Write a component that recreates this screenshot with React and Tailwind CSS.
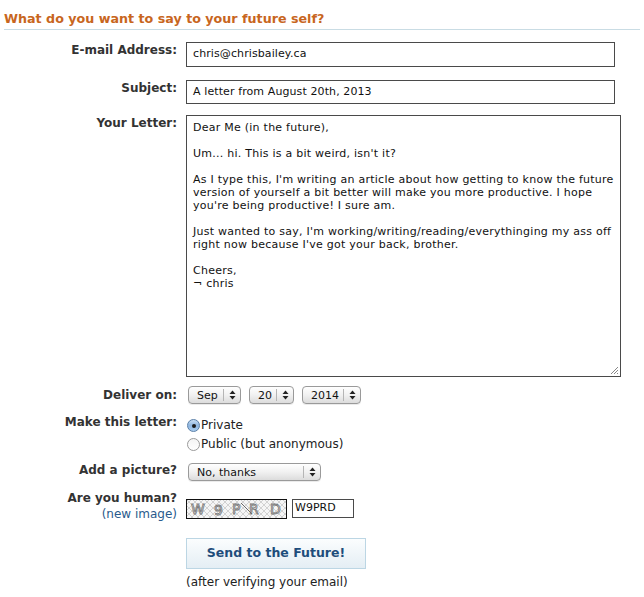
import React from "react";

const font = { fontFamily: '"DejaVu Sans", Verdana, sans-serif' };

function Arrows() {
  return (
    <svg width="7" height="10" viewBox="0 0 7 10" className="shrink-0">
      <path d="M3.5 0.5 L6.5 4 L0.5 4 Z" fill="#222" />
      <path d="M3.5 9.5 L6.5 6 L0.5 6 Z" fill="#222" />
    </svg>
  );
}

function AquaSelect({ value, width }) {
  return (
    <div
      className="flex items-stretch h-[18px] rounded-[4px] border border-[#9a9a9a] bg-gradient-to-b from-[#ffffff] via-[#f1f1f1] to-[#dcdcdc] shadow-[0_1px_0_rgba(0,0,0,0.08)]"
      style={{ width }}
    >
      <div className="flex-1 flex items-center pl-[8px] text-[11px] text-[#111] leading-none">{value}</div>
      <div className="w-px bg-[#b5b5b5] my-[2px]" />
      <div className="w-[16px] flex items-center justify-center">
        <Arrows />
      </div>
    </div>
  );
}

function Radio({ checked }) {
  return checked ? (
    <div className="w-[13px] h-[13px] rounded-full border border-[#5a7fa8] bg-gradient-to-b from-[#c9def3] via-[#8fb6e0] to-[#a9cdf0] flex items-center justify-center shrink-0">
      <div className="w-[4px] h-[4px] rounded-full bg-[#1a1a1a]" />
    </div>
  ) : (
    <div className="w-[13px] h-[13px] rounded-full border border-[#9a9a9a] bg-gradient-to-b from-[#f4f4f4] to-[#ffffff] shrink-0" />
  );
}

function Captcha() {
  return (
    <svg width="101" height="20" viewBox="0 0 101 20" className="block">
      <defs>
        <pattern id="hatch" width="6" height="6" patternUnits="userSpaceOnUse">
          <rect width="6" height="6" fill="#f5f5f5" />
          <path d="M0 0 L6 6 M6 0 L0 6" stroke="#c8c8c8" strokeWidth="0.8" />
        </pattern>
      </defs>
      <rect x="0.5" y="0.5" width="100" height="19" fill="url(#hatch)" stroke="#111" />
      <g fontFamily="DejaVu Sans, sans-serif" fontSize="14" fill="#e2e2e2" stroke="#777" strokeWidth="0.8">
        <text x="5" y="15">W</text>
        <text x="28" y="16">9</text>
        <text x="46" y="15">P</text>
        <text x="63" y="15">R</text>
        <text x="84" y="15">D</text>
      </g>
      <path d="M55 4 L66 15" stroke="#6a6a6a" strokeWidth="1" />
    </svg>
  );
}

function Label({ children, className = "" }) {
  return (
    <div className={"w-[177px] shrink-0 text-right font-bold text-[12px] text-[#333] leading-[16px] " + className}>
      {children}
    </div>
  );
}

export default function App() {
  const letter = `Dear Me (in the future),

Um... hi. This is a bit weird, isn't it?

As I type this, I'm writing an article about how getting to know the future version of yourself a bit better will make you more productive. I hope you're being productive! I sure am.

Just wanted to say, I'm working/writing/reading/everythinging my ass off right now because I've got your back, brother.

Cheers,
¬ chris`;

  return (
    <div className="w-[644px] h-[597px] bg-white overflow-hidden text-[#222]" style={font}>
      <div className="pt-[10px] pl-[4px] pr-[4px]">
        <h1 className="text-[12.7px] font-bold text-[#c8661e] leading-[17px]">
          What do you want to say to your future self?
        </h1>
        <div className="mt-[2px] h-px bg-[#c9dce4]" />
      </div>

      {/* Email */}
      <div className="flex mt-[12px]">
        <Label>E-mail Address:</Label>
        <div className="ml-[9px] w-[429px] h-[25px] border border-[#4a4a4a] flex items-center px-[6px] text-[11px] tracking-[0.1px] text-[#111]">
          chris@chrisbailey.ca
        </div>
      </div>

      {/* Subject */}
      <div className="flex mt-[13px]">
        <Label>Subject:</Label>
        <div className="ml-[9px] w-[429px] h-[24px] border border-[#4a4a4a] flex items-center px-[6px] text-[11px] tracking-[0.1px] text-[#111]">
          A letter from August 20th, 2013
        </div>
      </div>

      {/* Letter */}
      <div className="flex mt-[11px]">
        <Label>Your Letter:</Label>
        <div className="ml-[9px] w-[435px] h-[262px] border border-[#4a4a4a] relative pl-[6px] pr-0 pt-[5px] text-[11px] leading-[13px] tracking-[0.25px] text-[#111] whitespace-pre-wrap">
          {letter}
          <svg width="10" height="10" viewBox="0 0 10 10" className="absolute right-[1px] bottom-[1px]">
            <path d="M9 2 L2 9 M9 5 L5 9 M9 8 L8 9" stroke="#888" strokeWidth="1" />
          </svg>
        </div>
      </div>

      {/* Deliver on */}
      <div className="flex mt-[9px] items-center">
        <Label className="mt-[0px]">Deliver on:</Label>
        <div className="ml-[11px] flex gap-[8px]">
          <AquaSelect value="Sep" width={53} />
          <AquaSelect value="20" width={45} />
          <AquaSelect value="2014" width={59} />
        </div>
      </div>

      {/* Make this letter */}
      <div className="flex mt-[12px]">
        <Label className="mt-[-2px]">Make this letter:</Label>
        <div className="ml-[10px] flex flex-col text-[12px] leading-[19px] text-[#222]">
          <div className="flex items-center gap-[1px]">
            <Radio checked />
            <span>Private</span>
          </div>
          <div className="flex items-center gap-[1px]">
            <Radio />
            <span>Public (but anonymous)</span>
          </div>
        </div>
      </div>

      {/* Add a picture */}
      <div className="flex mt-[9px] items-center">
        <Label className="-mt-[4px]">Add a picture?</Label>
        <div className="ml-[11px]">
          <AquaSelect value="No, thanks" width={133} />
        </div>
      </div>

      {/* Captcha */}
      <div className="flex mt-[9px]">
        <div className="w-[177px] shrink-0 text-right text-[12px] leading-[16px]">
          <div className="font-bold text-[#333]">Are you human?</div>
          <div className="text-[#2a5a8c]">(new image)</div>
        </div>
        <div className="ml-[9px] mt-[9px] flex items-start gap-[5px]">
          <Captcha />
          <div className="w-[62px] h-[19px] border border-[#4a4a4a] flex items-center px-[2px] text-[11px] text-[#111]">
            W9PRD
          </div>
        </div>
      </div>

      {/* Button */}
      <div className="flex mt-[16px]">
        <div className="w-[177px] shrink-0" />
        <div className="ml-[9px] flex flex-col">
          <div className="w-[180px] h-[31px] border border-[#bcd6e4] bg-gradient-to-b from-[#fbfdfe] to-[#e4eef4] flex items-center justify-center text-[12.5px] font-bold text-[#1e4d7b]">
            Send to the Future!
          </div>
          <div className="mt-[5px] text-[12px] leading-[16px] text-[#222]">(after verifying your email)</div>
        </div>
      </div>
    </div>
  );
}
